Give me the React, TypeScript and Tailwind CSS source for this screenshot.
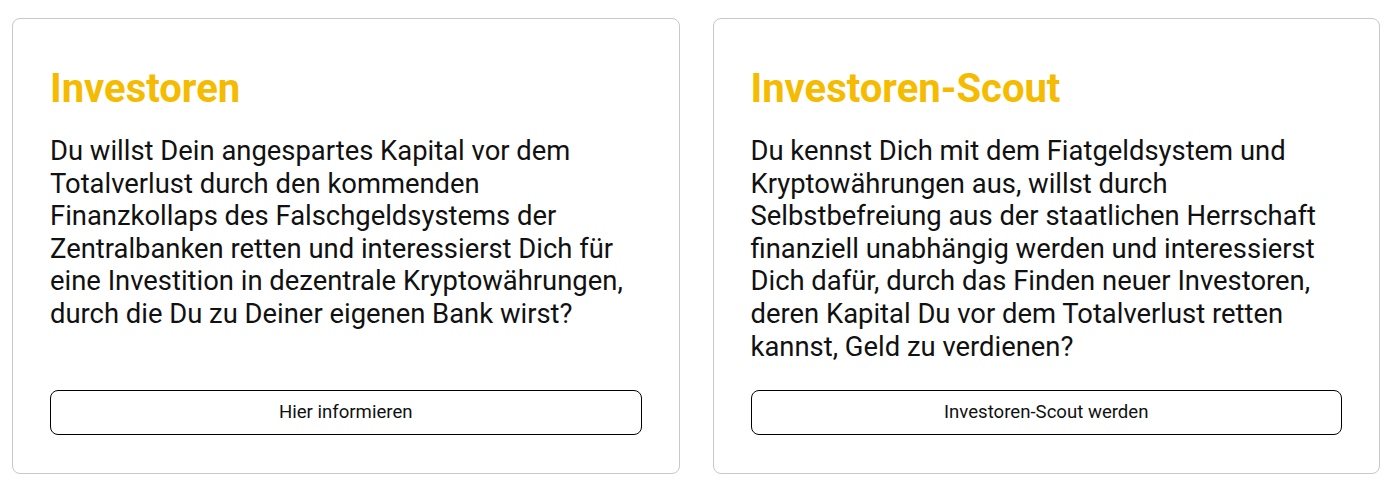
import React from "react";

const cards = [
  {
    title: "Investoren",
    text: "Du willst Dein angespartes Kapital vor dem Totalverlust durch den kommenden Finanzkollaps des Falschgeldsystems der Zentralbanken retten und interessierst Dich für eine Investition in dezentrale Kryptowährungen, durch die Du zu Deiner eigenen Bank wirst?",
    button: "Hier informieren",
  },
  {
    title: "Investoren-Scout",
    text: "Du kennst Dich mit dem Fiatgeldsystem und Kryptowährungen aus, willst durch Selbstbefreiung aus der staatlichen Herrschaft finanziell unabhängig werden und interessierst Dich dafür, durch das Finden neuer Investoren, deren Kapital Du vor dem Totalverlust retten kannst, Geld zu verdienen?",
    button: "Investoren-Scout werden",
  },
];

export default function App() {
  return (
    <div
      className="bg-white w-[1391px] h-[485px] pl-[12px] pr-[11px] pt-[18px]"
      style={{ fontFamily: "Roboto, 'Liberation Sans', sans-serif" }}
    >
      <div className="grid grid-cols-2 gap-[33px]">
        {cards.map((c) => (
          <div
            key={c.title}
            className="flex flex-col border border-[#c8c8c8] rounded-[8px] px-[37px] pt-[38px] pb-[38px]"
          >
            <h2 className="mt-[8px] text-[40px] leading-[48px] font-bold text-[#f5bb00]">
              {c.title}
            </h2>
            <p className="mt-[22px] mb-[27px] text-[27.4px] leading-[32.6px] text-[#111111]">
              {c.text}
            </p>
            <button className="mt-auto h-[45px] w-full border border-black rounded-[8px] text-[18.6px] text-[#111111] bg-white">
              {c.button}
            </button>
          </div>
        ))}
      </div>
    </div>
  );
}
